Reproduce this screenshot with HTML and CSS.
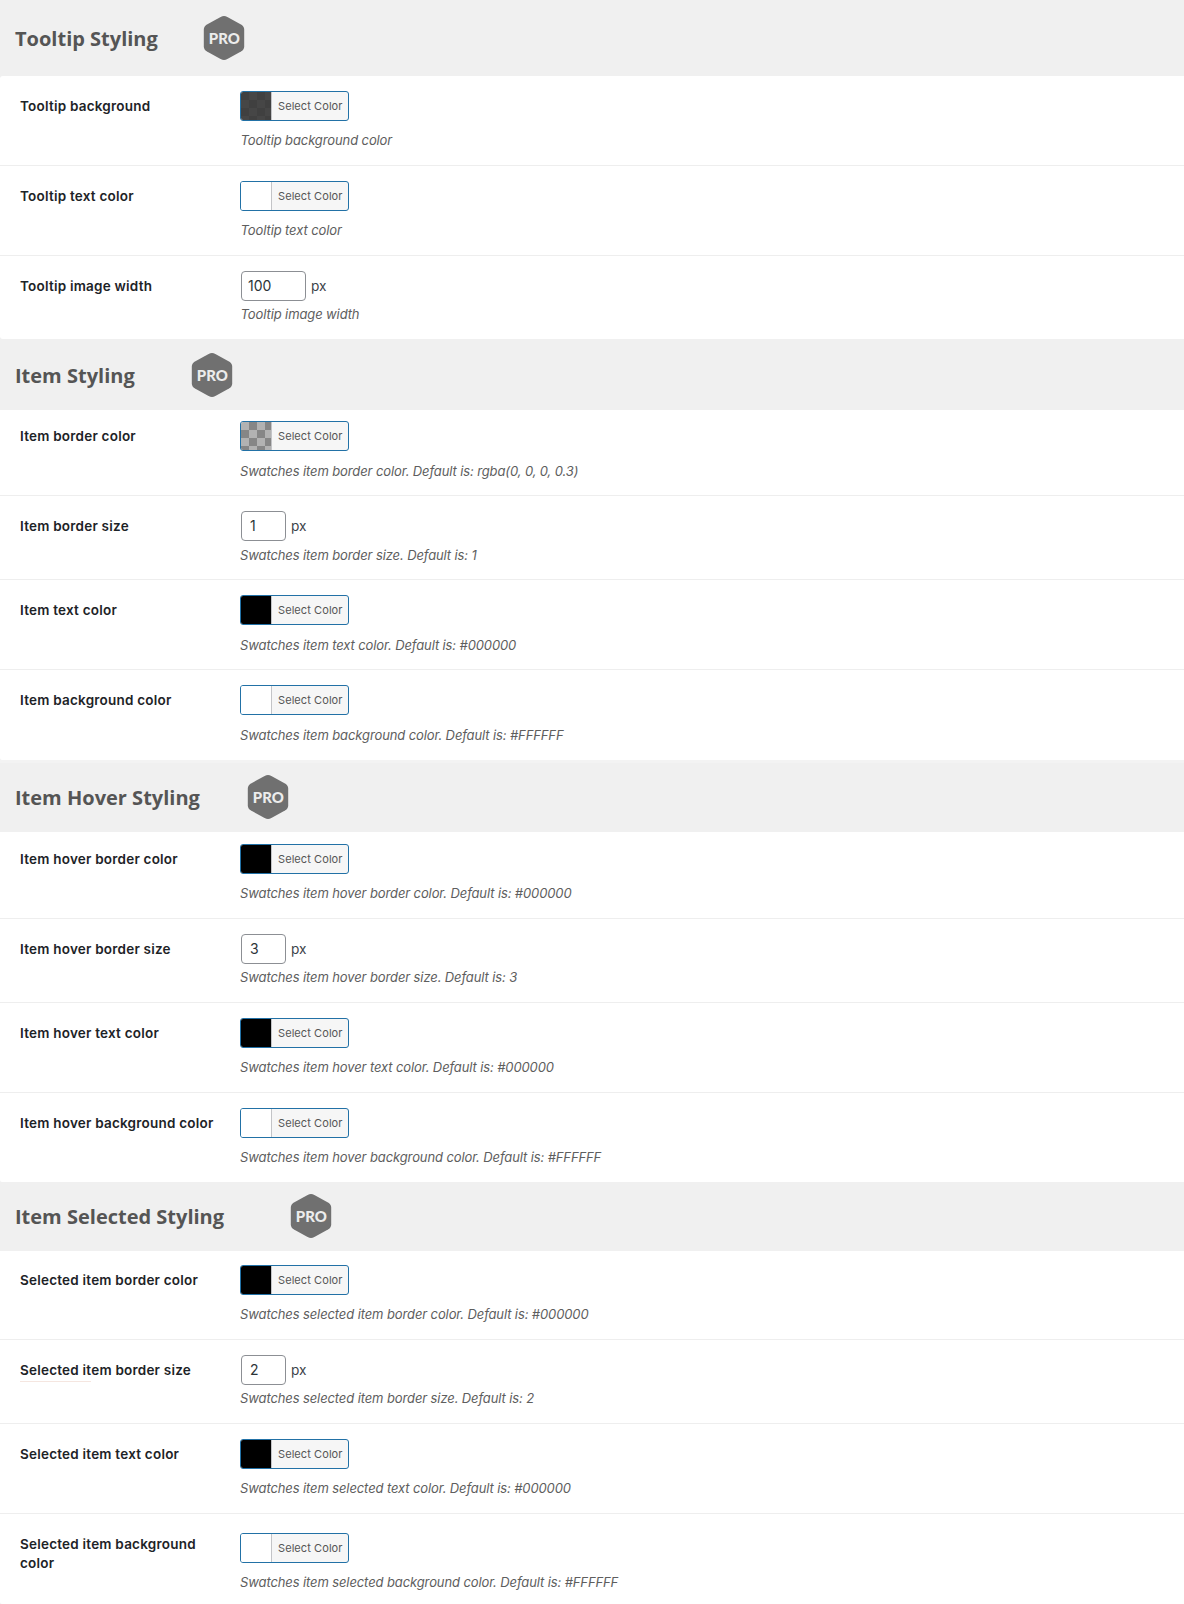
FILE: index.html
```html
<!DOCTYPE html>
<html lang="en">
<head>
<meta charset="utf-8">
<title>Swatches styling</title>
<link rel="stylesheet" href="styles.css">
</head>
<body>
<header class="head head-tooltip"><h2>Tooltip Styling</h2>
  <svg class="badge" viewBox="0 0 42 46"><path d="M17.6 2Q21 .2 24.4 2L38 9.4Q41.2 11.2 41.2 14.4V31.6Q41.2 34.8 38 36.6L24.4 44Q21 45.8 17.6 44L4 36.6Q.8 34.8 .8 31.6V14.4Q.8 11.2 4 9.4Z"/><text x="5.8" y="29" textLength="31" lengthAdjust="spacingAndGlyphs">PRO</text></svg>
</header>
<section class="group group-tooltip">
  <div class="row"><label>Tooltip background</label><div><button class="picker"><i class="swatch dark"></i><span>Select Color</span></button><p>Tooltip background color</p></div></div>
  <div class="row"><label>Tooltip text color</label><div><button class="picker"><i class="swatch white"></i><span>Select Color</span></button><p>Tooltip text color</p></div></div>
  <div class="row size"><label>Tooltip image width</label><div><div class="field"><input class="wide" value="100"><span>px</span></div><p>Tooltip image width</p></div></div>
</section>

<header class="head head-item"><h2>Item Styling</h2>
  <svg class="badge" viewBox="0 0 42 46"><path d="M17.6 2Q21 .2 24.4 2L38 9.4Q41.2 11.2 41.2 14.4V31.6Q41.2 34.8 38 36.6L24.4 44Q21 45.8 17.6 44L4 36.6Q.8 34.8 .8 31.6V14.4Q.8 11.2 4 9.4Z"/><text x="5.8" y="28.6" textLength="31" lengthAdjust="spacingAndGlyphs">PRO</text></svg>
</header>
<section class="group group-item">
  <div class="row"><label>Item border color</label><div><button class="picker"><i class="swatch alpha"></i><span>Select Color</span></button><p>Swatches item border color. Default is: rgba(0, 0, 0, 0.3)</p></div></div>
  <div class="row size"><label>Item border size</label><div><div class="field"><input value="1"><span>px</span></div><p>Swatches item border size. Default is: 1</p></div></div>
  <div class="row"><label>Item text color</label><div><button class="picker"><i class="swatch black"></i><span>Select Color</span></button><p>Swatches item text color. Default is: #000000</p></div></div>
  <div class="row"><label>Item background color</label><div><button class="picker"><i class="swatch white"></i><span>Select Color</span></button><p>Swatches item background color. Default is: #FFFFFF</p></div></div>
</section>

<header class="head head-hover"><h2>Item Hover Styling</h2>
  <svg class="badge" viewBox="0 0 42 46"><path d="M17.6 2Q21 .2 24.4 2L38 9.4Q41.2 11.2 41.2 14.4V31.6Q41.2 34.8 38 36.6L24.4 44Q21 45.8 17.6 44L4 36.6Q.8 34.8 .8 31.6V14.4Q.8 11.2 4 9.4Z"/><text x="5.8" y="28.6" textLength="31" lengthAdjust="spacingAndGlyphs">PRO</text></svg>
</header>
<section class="group group-hover">
  <div class="row"><label>Item hover border color</label><div><button class="picker"><i class="swatch black"></i><span>Select Color</span></button><p>Swatches item hover border color. Default is: #000000</p></div></div>
  <div class="row size"><label>Item hover border size</label><div><div class="field"><input value="3"><span>px</span></div><p>Swatches item hover border size. Default is: 3</p></div></div>
  <div class="row"><label>Item hover text color</label><div><button class="picker"><i class="swatch black"></i><span>Select Color</span></button><p>Swatches item hover text color. Default is: #000000</p></div></div>
  <div class="row"><label>Item hover background color</label><div><button class="picker"><i class="swatch white"></i><span>Select Color</span></button><p>Swatches item hover background color. Default is: #FFFFFF</p></div></div>
</section>

<header class="head head-selected"><h2>Item Selected Styling</h2>
  <svg class="badge" viewBox="0 0 42 46"><path d="M17.6 2Q21 .2 24.4 2L38 9.4Q41.2 11.2 41.2 14.4V31.6Q41.2 34.8 38 36.6L24.4 44Q21 45.8 17.6 44L4 36.6Q.8 34.8 .8 31.6V14.4Q.8 11.2 4 9.4Z"/><text x="5.8" y="28.6" textLength="31" lengthAdjust="spacingAndGlyphs">PRO</text></svg>
</header>
<section class="group group-selected">
  <div class="row"><label>Selected item border color</label><div><button class="picker"><i class="swatch black"></i><span>Select Color</span></button><p>Swatches selected item border color. Default is: #000000</p></div></div>
  <div class="row size"><label><span class="marked">Selected it</span>em border size</label><div><div class="field"><input value="2"><span>px</span></div><p>Swatches selected item border size. Default is: 2</p></div></div>
  <div class="row"><label>Selected item text color</label><div><button class="picker"><i class="swatch black"></i><span>Select Color</span></button><p>Swatches item selected text color. Default is: #000000</p></div></div>
  <div class="row tall"><label>Selected item background<br>color</label><div><button class="picker"><i class="swatch white"></i><span>Select Color</span></button><p>Swatches item selected background color. Default is: #FFFFFF</p></div></div>
</section>
</body>
</html>
```

FILE: styles.css
```css
* { box-sizing: border-box; }

body {
  margin: 0;
  height: 1604px;
  overflow: hidden;
  background: #f0f0f0;
  font-family: Inter, "Liberation Sans", sans-serif;
}

.head { display: flex; align-items: flex-start; padding-left: 15px; }
.head h2 {
  margin: 0;
  padding-top: 10px;
  font: 700 20px/28px "Open Sans", sans-serif;
  color: #555;
  white-space: nowrap;
}
.badge { width: 42px; height: 46px; flex: none; }
.badge path { fill: #707070; }
.badge text { font: 900 15px Lato, sans-serif; fill: #ececec; }

.head-tooltip { height: 76px; padding-top: 15px; }
.head-item { height: 71px; padding-top: 13px; }
.head-hover { height: 72px; padding-top: 11px; border-top: 3px solid #f3f3f3; }
.head-selected { height: 69px; padding-top: 11px; }
.head-tooltip h2 { width: 188px; }
.head-item h2 { width: 176px; }
.head-hover h2 { width: 231.5px; }
.head-selected h2 { width: 275px; }

.group { background: #fff; border-radius: 0 0 0 2px; }
.group-tooltip { border-radius: 3px 0 0 3px; }

.row {
  display: grid;
  grid-template-columns: 220px 1fr;
  height: 90px;
  padding: 15px 0 0 20px;
  border-bottom: 1px solid #eee;
}
.row:last-child { border-bottom-color: transparent; }
.size { height: 84px; }

.group-tooltip .row:last-child { height: 83px; }
.group-item .row:first-child { height: 86px; padding-top: 11px; }
.group-hover .row:first-child { height: 87px; padding-top: 12px; }
.group-hover .row:last-child { height: 89px; }
.group-selected .row:first-child { height: 89px; padding-top: 14px; }
.group-selected .tall { padding-top: 19px; }
.tall label { margin-top: -4px; }

label {
  padding-top: 6px;
  font-size: 13.5px;
  font-weight: 600;
  line-height: 19px;
  letter-spacing: .22px;
  color: #1d2327;
  white-space: nowrap;
}
.marked { padding-bottom: 3px; border-bottom: 1px solid #f5e6e0; }

.picker {
  display: flex;
  width: 109px;
  height: 30px;
  padding: 0;
  overflow: hidden;
  border: 1px solid #2271a6;
  border-radius: 3px;
  background: #f6f6f6;
  font: 11px/28px Inter, sans-serif;
  color: #555;
}
.picker span {
  flex: 1;
  padding-left: 6px;
  border-left: 1px solid #c3c4c7;
  letter-spacing: .08px;
  text-align: left;
  white-space: nowrap;
}
.swatch { width: 30px; height: 28px; }
.white { background: #fff; }
.black { background: #000; }
.dark { background: repeating-conic-gradient(#464646 0 25%, #404040 0 50%) 0 0 / 16px 16px; }
.alpha { background: repeating-conic-gradient(#868686 0 25%, #b2b2b2 0 50%) 0 0 / 16px 16px; }

.field { display: flex; align-items: center; height: 30px; padding-left: 1px; gap: 5px; }
.field input {
  width: 45px;
  height: 30px;
  padding: 0 8px 1px;
  border: 1px solid #8c8f94;
  border-radius: 4px;
  background: #fff;
  font: 14px Inter, sans-serif;
  color: #2c3338;
}
.field .wide { width: 65px; padding-left: 6px; }
.field span { font-size: 13.7px; color: #3c434a; }

p {
  margin: 10px 0 0;
  font-size: 13px;
  font-style: italic;
  line-height: 19px;
  letter-spacing: -.11px;
  color: #5e5e5e;
  white-space: nowrap;
}
.size p { margin-top: 4px; }
.group-item p { margin-top: 10.6px; }
.group-item .size p { margin-top: 4.6px; }
.group-tooltip p { padding-left: .6px; }
```
